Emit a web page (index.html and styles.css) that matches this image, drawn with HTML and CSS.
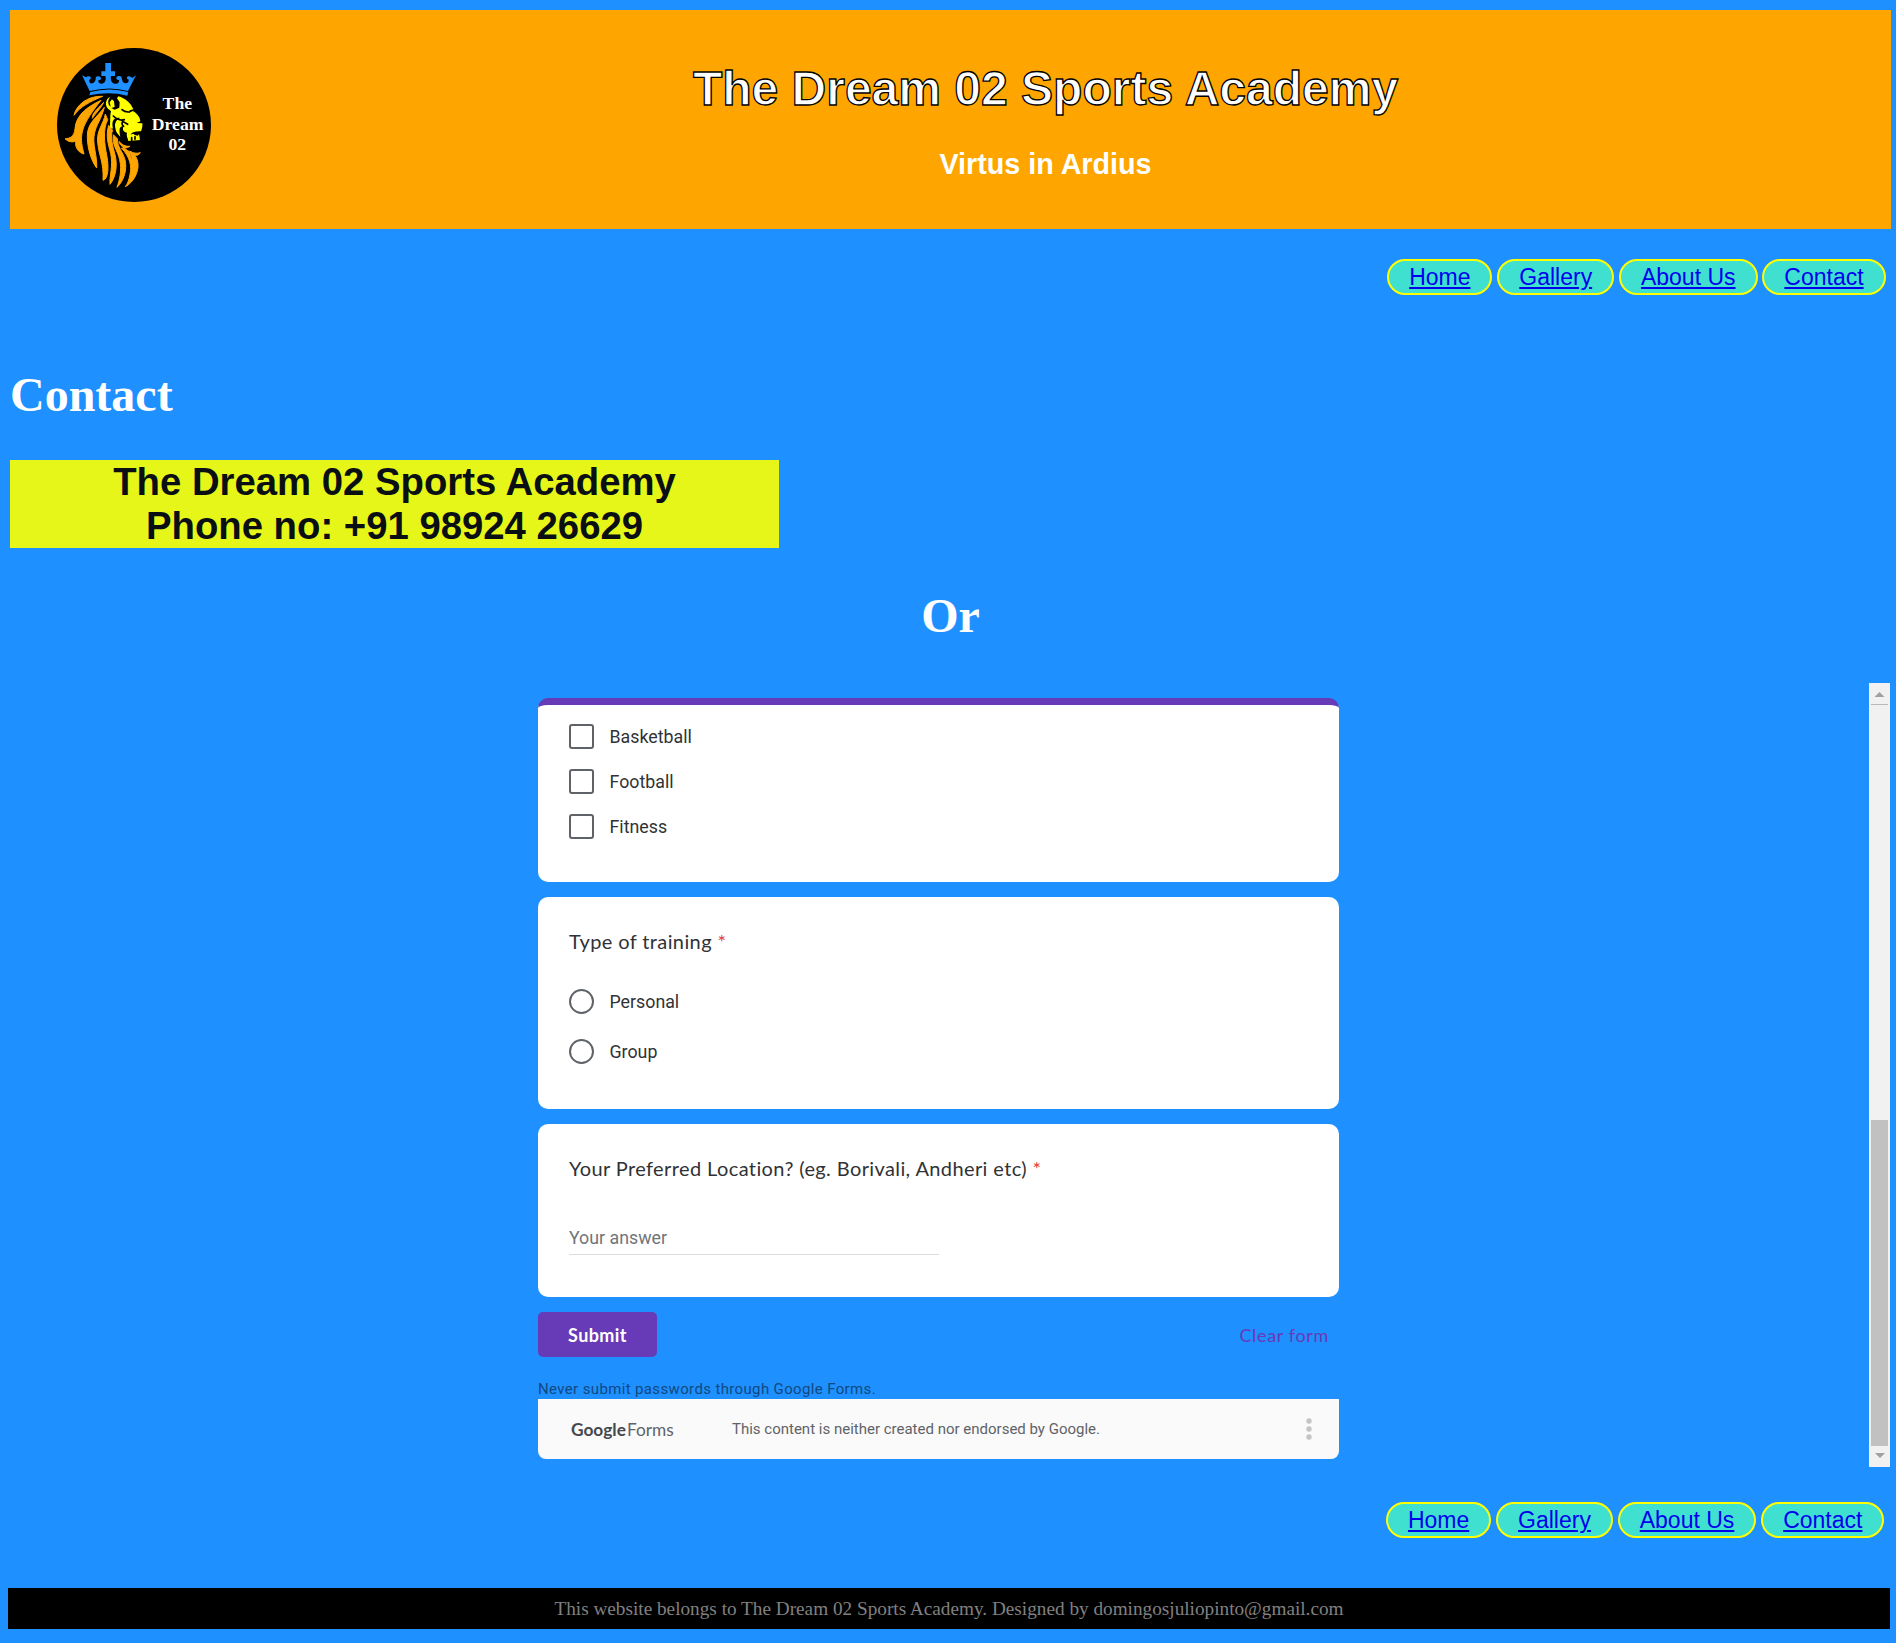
FILE: index.html
```html
<!DOCTYPE html>
<html lang="en">
<head>
<meta charset="utf-8">
<title>Contact - The Dream 02 Sports Academy</title>
<link rel="stylesheet" href="styles.css">
</head>
<body>
<header class="banner">
  <svg class="logo" viewBox="21 24 462 462" role="img" aria-label="The Dream 02">
    <circle cx="252" cy="255" r="231" fill="#000"/>
    <g fill="#1e90ff">
      <path d="M166 69h17v25h12v14h-12c-2 12 2 22 12 23 9 1 14-6 12-12-4 2-9-1-8-6 2-6 11-6 16-2 0 8 3 18 11 19 8 0 12-6 9-12-4 0-6-5-3-8 6-4 13 2 15 4l11-8-24 47q-54-15-115 0l-23-47 12 6c4-4 11-5 14-1 2 4-1 8-4 8-2 7 3 12 9 11 8-2 11-11 10-18 5-5 14-3 16 2 1 5-4 8-8 6-1 7 4 12 11 11 10-2 13-12 10-23h-12V94h12z"/>
      <path d="M121 156q57-15 114 0l-3 11q-54-14-114-1z"/>
    </g>
    <g fill="#ffa500" stroke="#ffa500" stroke-width="3" stroke-linejoin="round">
      <path d="M158 169C115 166 78 195 72 226 90 200 120 185 158 169z"/>
      <path d="M153 181C112 200 78 225 75 266 73 290 59 296 45 296 55 306 68 308 77 303 74 325 88 339 102 342 93 310 92 290 99 268 105 245 130 210 153 181z"/>
      <path d="M161 187C150 201 125 218 127 235 135 222 153 205 161 187z"/>
      <path d="M163 202C140 233 111 249 112 290 112 333 129 370 140 384 143 350 125 310 134 278 138 257 155 235 163 202z"/>
      <path d="M166 222C161 251 139 272 143 306 146 346 162 367 159 421 176 416 176 380 171 350 163 309 158 270 173 239z"/>
      <path d="M176 256C167 288 174 310 182 340 190 378 178 407 180 433 198 411 203 375 195 344 187 314 180 288 188 271z"/>
      <path d="M190 284C185 315 203 331 209 359 216 392 209 418 201 442 222 422 232 389 225 359 218 335 202 321 202 296z"/>
      <path d="M207 304C208 322 241 329 245 350 248 371 243 354 240 343 233 328 214 324 214 324 240 350 246 380 240 403 237 420 232 433 226 440 250 428 266 397 264 372 263 359 258 350 254 346 261 347 268 344 271 338 260 341 249 340 241 334 251 337 225 333 219 323 228 325 236 322 240 319 225 320 215 314 207 304z"/>
    </g>
    <path fill="#ff0" d="M181 171C166 176 164 197 174 206L183 214C180 225 181 236 180 262L189 266C184 245 190 231 210 234 198 241 193 249 196 264 198 279 206 284 211 290 206 268 209 258 220 258 216 272 222 276 231 278 228 286 233 293 235 303L270 300 267 282 264 287 255 285 249 281 242 284C245 276 259 274 273 274 277 265 278 255 277 250L260 249 271 244C270 230 261 221 249 213L236 219 239 211 250 208C244 191 225 174 205 169L201 175 209 187 208 203 194 209 184 204 194 201 192 184 186 178 179 187 182 200C172 194 173 178 181 171z"/>
    <g fill="none" stroke="#000" stroke-linecap="round" stroke-width="5"><path d="M190 228q17 16 33 11M221 259q-8-6-3-15l15 9M216 209q8 8 21 7M245 293v9M255 290v8"/></g>
    <g class="logo-text"><text x="382" y="207">The</text><text x="383" y="269">Dream</text><text x="382" y="331">02</text></g>
  </svg>
  <div class="banner-text">
    <h1 class="site-title">The Dream 02 Sports Academy</h1>
    <p class="motto">Virtus in Ardius</p>
  </div>
</header>
<nav class="nav">
  <a href="#">Home</a><a href="#">Gallery</a><a href="#">About Us</a><a href="#">Contact</a>
</nav>
<main>
  <h2 class="heading">Contact</h2>
  <div class="phone">The Dream 02 Sports Academy<br>Phone no: +91 98924 26629</div>
  <h2 class="heading or">Or</h2>
  <div class="frame">
    <div class="form">
      <section class="card first">
        <label class="option"><span class="box"></span>Basketball</label>
        <label class="option"><span class="box"></span>Football</label>
        <label class="option"><span class="box"></span>Fitness</label>
      </section>
      <section class="card training">
        <h3 class="question">Type of training <span class="req">*</span></h3>
        <label class="option"><span class="box radio"></span>Personal</label>
        <label class="option"><span class="box radio"></span>Group</label>
      </section>
      <section class="card location">
        <h3 class="question">Your Preferred Location? (eg. Borivali, Andheri etc) <span class="req">*</span></h3>
        <div class="answer">Your answer</div>
      </section>
      <div class="actions"><button class="submit">Submit</button><a class="clear">Clear form</a></div>
      <p class="warning">Never submit passwords through Google Forms.</p>
      <div class="credit">
        <span class="brand"><b>Google</b>Forms</span>
        <span class="disclaimer">This content is neither created nor endorsed by Google.</span>
        <svg class="dots" viewBox="0 0 6 22"><circle cx="3" cy="3" r="2.7"/><circle cx="3" cy="11" r="2.7"/><circle cx="3" cy="19" r="2.7"/></svg>
      </div>
    </div>
    <div class="scrollbar">
      <svg class="arrow up" viewBox="0 0 10 5"><path d="M0 5 5 0l5 5z"/></svg>
      <div class="thumb"></div>
      <svg class="arrow" viewBox="0 0 10 5"><path d="M0 0h10L5 5z"/></svg>
    </div>
  </div>
</main>
<nav class="nav bottom">
  <a href="#">Home</a><a href="#">Gallery</a><a href="#">About Us</a><a href="#">Contact</a>
</nav>
<footer class="footer">This website belongs to The Dream 02 Sports Academy. Designed by domingosjuliopinto@gmail.com</footer>
</body>
</html>
```
FILE: styles.css
```css
* { box-sizing: border-box; }
body {
  margin: 0;
  padding: 10px 5px 0 10px;
  height: 1643px;
  overflow: hidden;
  background: #1e90ff;
  font-family: "Liberation Serif", serif;
}
h1, h2, h3, p { margin: 0; font-weight: bold; }

.banner {
  display: flex;
  height: 219px;
  padding: 38px 0 0 47px;
  background: #ffa500;
}
.logo { flex: none; width: 154px; height: 154px; }
.logo-text {
  fill: #fff;
  font: bold 53px "Liberation Serif", serif;
  text-anchor: middle;
}
.banner-text {
  flex: 1;
  padding-right: 11px;
  color: #fff;
  font-family: "Liberation Sans", sans-serif;
  text-align: center;
}
.site-title {
  padding-top: 13px;
  font-size: 48px;
  line-height: 55px;
  -webkit-text-stroke: 1.3px #000;
}
.motto { margin-top: 32px; font-size: 28.7px; line-height: 33px; }

.nav {
  display: flex;
  justify-content: flex-end;
  gap: 4.8px;
  margin-top: 30px;
  padding-right: 5.4px;
}
.nav a {
  height: 36px;
  padding: 0 20px;
  border: 2px solid #ff0;
  border-radius: 18px;
  background: #40e0d0;
  color: #00e;
  font: 23px/32px "Liberation Sans", sans-serif;
}

.heading { margin-top: 71px; color: #fff; font-size: 48px; line-height: 58px; }
.phone {
  width: 769px;
  margin-top: 36px;
  background: #e6f619;
  color: #0a0f14;
  font: bold 38.3px/44px "Liberation Sans", sans-serif;
  text-align: center;
}
.or { margin-top: 39px; text-align: center; }

.frame {
  display: flex;
  justify-content: space-between;
  height: 784px;
  margin-top: 38px;
  padding: 15px 1px 0 528px;
  font-family: Roboto, sans-serif;
  color: #303236;
}
.form { width: 801px; }
.card { background: #fff; border-radius: 10px; padding-left: 31px; }
.first {
  height: 184px;
  padding-top: 19px;
  border-top: 7px solid #673ab7;
}
.option {
  display: flex;
  align-items: center;
  gap: 15.5px;
  height: 25px;
  font-size: 17.8px;
}
.option + .option { margin-top: 20px; }
.box { width: 25px; height: 25px; border: 2.4px solid #5f6368; border-radius: 3px; }
.radio { border-radius: 50%; }
.training { height: 212px; margin-top: 15px; padding-top: 29px; }
.question {
  margin-bottom: 33px;
  font: 20px/30px Lato, sans-serif;
  letter-spacing: 0.39px;
}
.req { color: #e53935; }
.training .option + .option { margin-top: 25px; }
.location { height: 173px; margin-top: 15px; padding-top: 29px; }
.answer {
  width: 370px;
  height: 39px;
  padding-top: 7px;
  border-bottom: 1px solid #dadce0;
  color: #70757a;
  font-size: 17.8px;
  line-height: 30px;
}

.actions {
  display: flex;
  justify-content: space-between;
  align-items: center;
  height: 45px;
  margin-top: 15px;
}
.submit {
  width: 119px;
  height: 45px;
  border: 0;
  border-radius: 5px;
  background: #673ab7;
  color: #fff;
  font: bold 18px Lato, sans-serif;
  letter-spacing: 0.4px;
}
.clear {
  padding-right: 10px;
  color: #673ab7;
  font: 18px Lato, sans-serif;
  letter-spacing: 0.65px;
}
.warning {
  margin-top: 22px;
  color: #11497f;
  font-size: 15px;
  font-weight: 400;
  line-height: 20px;
  letter-spacing: 0.36px;
}
.credit {
  display: flex;
  align-items: center;
  height: 60px;
  padding: 0 27px 0 33px;
  border-radius: 0 0 8px 8px;
  background: #fafafa;
  color: #5f6368;
}
.brand { width: 161px; font: 17.3px Lato, sans-serif; }
.brand b { margin-right: 1px; color: #45484c; }
.disclaimer { font-size: 15px; }
.dots { width: 6px; height: 22px; margin-left: auto; fill: #c4c4c4; }

.scrollbar {
  display: flex;
  flex-direction: column;
  align-items: center;
  justify-content: space-between;
  width: 21px;
  height: 784px;
  margin-top: -15px;
  padding: 0 0 9px;
  background: #f1f1f1;
}
.arrow { width: 10px; height: 5px; fill: #a0a0a0; }
.up {
  width: 17px;
  height: 22px;
  padding: 9px 3px 7px;
  border-bottom: 1px solid #b8b8b8;
}
.thumb { width: 17px; height: 326px; margin-top: auto; margin-bottom: 7px; background: #c1c1c1; }

.bottom { margin-top: 35px; padding-right: 6.6px; }
.footer {
  height: 41px;
  margin: 50px 1px 0 -2px;
  background: #000;
  color: #808080;
  font-size: 19.24px;
  line-height: 41px;
  text-align: center;
}
```
